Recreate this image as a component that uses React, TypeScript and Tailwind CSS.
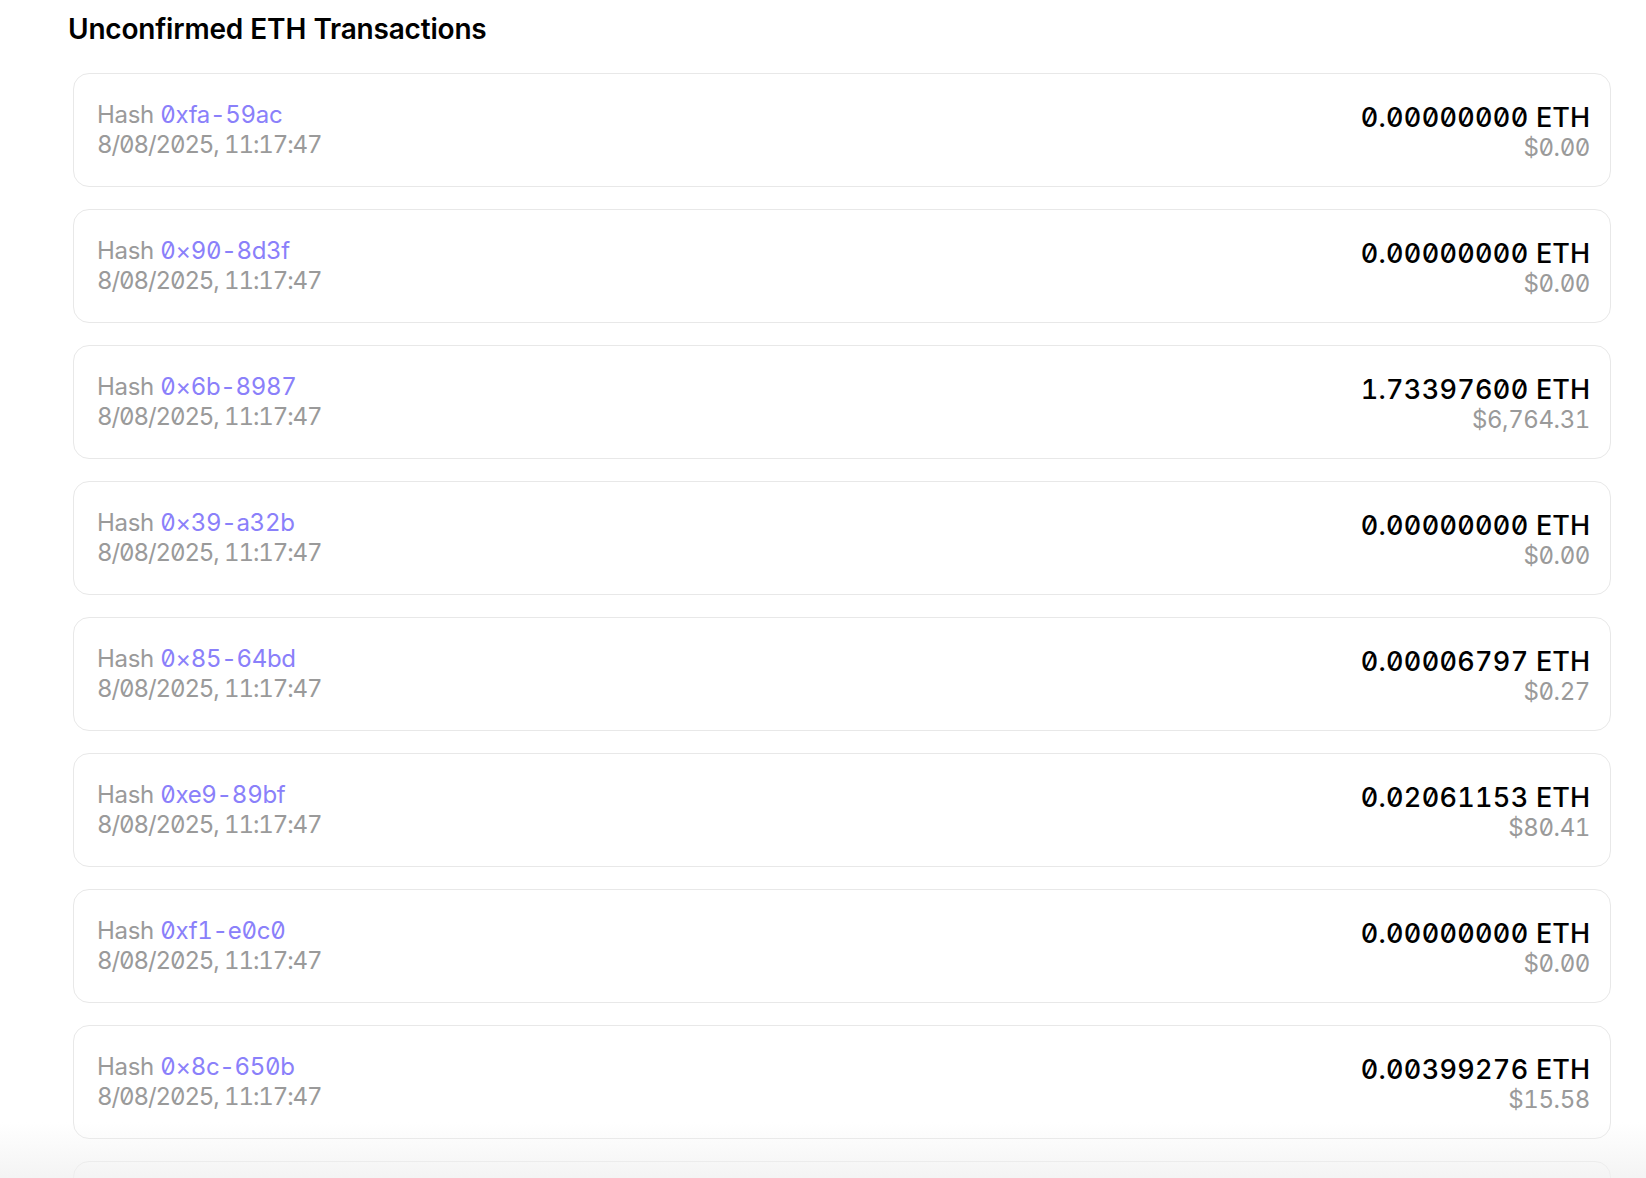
const txs = [
  { hash: "0xfa-59ac", eth: "0.00000000", usd: "$0.00" },
  { hash: "0×90-8d3f", eth: "0.00000000", usd: "$0.00" },
  { hash: "0×6b-8987", eth: "1.73397600", usd: "$6,764.31" },
  { hash: "0×39-a32b", eth: "0.00000000", usd: "$0.00" },
  { hash: "0×85-64bd", eth: "0.00006797", usd: "$0.27" },
  { hash: "0xe9-89bf", eth: "0.02061153", usd: "$80.41" },
  { hash: "0xf1-e0c0", eth: "0.00000000", usd: "$0.00" },
  { hash: "0×8c-650b", eth: "0.00399276", usd: "$15.58" },
  { hash: "0×2d-71fe", eth: "0.00000000", usd: "$0.00" },
];

function TxCard({ hash, eth, usd }: { hash: string; eth: string; usd: string }) {
  return (
    <div className="flex items-center justify-between h-[114px] shrink-0 rounded-[16px] border-[1.5px] border-[#e8e8e8] bg-white pl-[23px] pr-[20px]">
      <div className="flex flex-col text-[24px] leading-[30px] text-[#9a9a9a]">
        <div className="tracking-[-0.3px]">
          Hash <span className="text-[#8a80fa]">{hash}</span>
        </div>
        <div className="tracking-[-1.1px]">8/08/2025, 11:17:47</div>
      </div>
      <div className="mt-[5px] flex flex-col items-end">
        <div className="text-[27px] leading-[31px] font-medium text-black tracking-[0.3px]">
          {eth} <span className="tracking-normal">ETH</span>
        </div>
        <div className="text-[24px] leading-[30px] text-[#9a9a9a] tracking-[-0.4px]">{usd}</div>
      </div>
    </div>
  );
}

export default function App() {
  return (
    <div className="relative h-[1178px] overflow-hidden bg-white font-['Inter',sans-serif] slashed-zero tabular-nums">
      <div className="pl-[68px] pr-[35px] pt-[10px]">
        <h1 className="text-[28px] leading-[38px] font-semibold text-black tracking-[-0.2px]">Unconfirmed ETH Transactions</h1>
        <div className="mt-[25px] ml-[5px] flex flex-col gap-[22px]">
          {txs.map((t) => (
            <TxCard key={t.hash} {...t} />
          ))}
        </div>
      </div>
      <div className="pointer-events-none absolute inset-x-0 bottom-0 h-[56px] bg-gradient-to-b from-white/0 to-[#f0f0f0]/75" />
    </div>
  );
}
